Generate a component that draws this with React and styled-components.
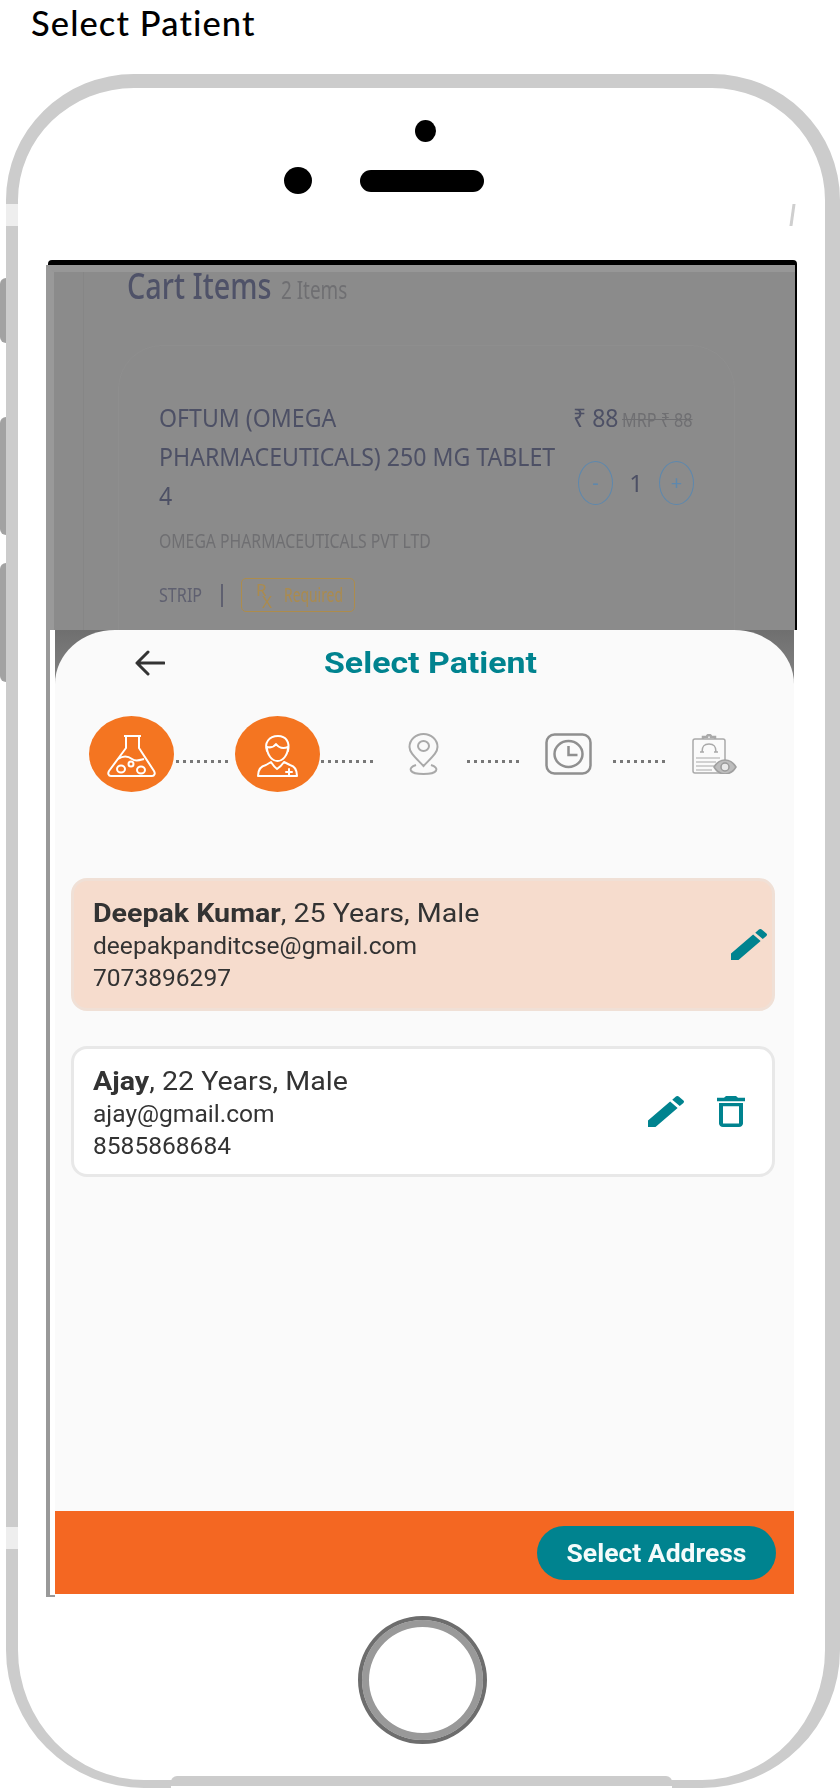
import React from "react";
import styled, { createGlobalStyle, css } from "styled-components";

const Global = createGlobalStyle`
  html, body { margin: 0; padding: 0; background: #fff; }
  body { width: 840px; height: 1788px; overflow: hidden; font-family: Roboto, "Liberation Sans", sans-serif; }
`;

const Page = styled.div`
  width: 840px;
  height: 1788px;
  overflow: hidden;
`;

const PageTitle = styled.h1`
  margin: 0;
  height: 74px;
  padding-left: 31px;
  box-sizing: border-box;
  font: 500 34.5px/46px Lato, sans-serif;
  letter-spacing: 1.1px;
  color: #000;
`;

const Phone = styled.div`
  position: relative;
  box-sizing: border-box;
  width: 834px;
  height: 1714px;
  margin-left: 6px;
  background: #fff;
  border-style: solid;
  border-color: #ccc;
  border-width: 14px 15px 8px 12px;
  border-radius: 128px 128px 138px 138px / 126px 126px 138px 138px;
  &::after {
    content: "";
    position: absolute;
    left: 153px;
    bottom: -8px;
    width: 501px;
    height: 10px;
    background: #ccc;
    border-bottom: 2px solid #fff;
    border-radius: 6px 6px 0 0;
  }
`;

const SideKey = styled.span`
  position: absolute;
  left: -18px;
  top: ${(p) => p.$top}px;
  width: 6px;
  height: ${(p) => p.$h}px;
  background: #a2a2a2;
  border-radius: 6px 0 0 6px;
`;

const Glint = styled.span`
  position: absolute;
  left: -12px;
  top: ${(p) => p.$top}px;
  width: 12px;
  height: 22px;
  background: #eeeeee;
`;

const RightGlint = styled.span`
  position: absolute;
  left: 773px;
  top: 116px;
  width: 3px;
  height: 22px;
  background: #cfcfcf;
  transform: skewX(-8deg);
`;

const Sensors = styled.div`
  height: 172px;
  box-sizing: border-box;
  padding-top: 32px;
`;

const FrontDot = styled.div`
  width: 21px;
  height: 22px;
  margin-left: 397px;
  border-radius: 50%;
  background: #000;
`;

const SensorRow = styled.div`
  display: flex;
  align-items: center;
  gap: 48px;
  margin-top: 25px;
  padding-left: 266px;
`;

const Camera = styled.div`
  width: 28px;
  height: 27px;
  border-radius: 50%;
  background: #000;
`;

const Speaker = styled.div`
  width: 124px;
  height: 22px;
  border-radius: 11px;
  background: #000;
`;

const Screen = styled.div`
  width: 751px;
  margin-left: 28px;
`;

const Backdrop = styled.div`
  box-sizing: border-box;
  height: 370px;
  margin-left: 2px;
  padding: 5px 2px 0 0;
  background: #000;
  border-radius: 4px 4px 0 0;
`;

const Dim = styled.div`
  box-sizing: border-box;
  height: 100%;
  margin-left: -2px;
  overflow: hidden;
  border-top: 7px solid #979797;
  border-left: 8px solid #999;
  background:
    linear-gradient(90deg, transparent 29px, #868686 29px, #868686 30px, transparent 30px),
    #8b8b8b;
`;

const Blurred = styled.div`
  filter: blur(0.45px);
`;

const scaled = css`
  display: inline-block;
  transform: scaleX(${(p) => p.$sx || 1});
  transform-origin: left center;
  white-space: nowrap;
`;

const CartHeading = styled.div`
  height: 81px;
  margin-top: -6px;
  padding-left: 73px;
  font: 500 36px/40px "Noto Sans", sans-serif;
  color: #4f5268;
  white-space: nowrap;
`;

const HeadingMain = styled.span`
  ${scaled}
`;

const HeadingCount = styled.span`
  ${scaled}
  position: absolute;
  margin-left: -27px;
  margin-top: 3px;
  font-size: 25px;
  font-weight: 400;
  color: #6f6f72;
`;

const CartCard = styled.div`
  box-sizing: border-box;
  display: flex;
  width: 617px;
  height: 300px;
  margin-top: -2px;
  margin-left: 64px;
  padding: 52px 0 0 40px;
  border: 1px solid #8e8e8e;
  border-radius: 44px 44px 0 0;
`;

const ItemInfo = styled.div`
  width: 414px;
  flex: none;
`;

const ItemName = styled.div`
  ${scaled}
  font: 400 25px/39px "Noto Sans", sans-serif;
  color: #4d5065;
`;

const Maker = styled.div`
  ${scaled}
  margin-top: 11px;
  font: 400 19px/30px "Noto Sans", sans-serif;
  color: #6f6f72;
`;

const Meta = styled.div`
  display: flex;
  align-items: center;
  margin-top: 22px;
  height: 34px;
`;

const Strip = styled.span`
  ${scaled}
  width: 62px;
  font: 400 19px/30px "Noto Sans", sans-serif;
  color: #5f6070;
`;

const Pipe = styled.span`
  width: 2px;
  height: 23px;
  margin-right: 18px;
  background: #5f6070;
`;

const RxBadge = styled.span`
  box-sizing: border-box;
  display: flex;
  align-items: center;
  width: 114px;
  height: 34px;
  padding-left: 14px;
  border: 1.5px solid #ad8c4c;
  border-radius: 5px;
  color: #ab8b4e;
  font: 400 19px/30px "Noto Sans", sans-serif;
`;

const RxMark = styled.span`
  position: relative;
  width: 30px;
  height: 30px;
  font-size: 17px;
  line-height: 20px;
  &::after {
    content: "X";
    position: absolute;
    left: 6px;
    top: 12px;
  }
`;

const RxText = styled.span`
  ${scaled}
  width: 70px;
`;

const PriceCol = styled.div`
  width: 122px;
  flex: none;
`;

const PriceRow = styled.div`
  display: flex;
  align-items: baseline;
  height: 39px;
  white-space: nowrap;
`;

const Price = styled.span`
  ${scaled}
  width: 51px;
  font: 400 25px/39px "Noto Sans", sans-serif;
  color: #4d5065;
`;

const Mrp = styled.span`
  ${scaled}
  font: 400 19px/30px "Noto Sans", sans-serif;
  color: #6f6f72;
  text-decoration: line-through;
`;

const Stepper = styled.div`
  display: flex;
  align-items: center;
  margin-top: 24px;
  margin-left: 5px;
`;

const RoundBtn = styled.span`
  box-sizing: border-box;
  display: flex;
  align-items: center;
  justify-content: center;
  width: 35px;
  height: 44px;
  border: 1.5px solid #5e88ad;
  border-radius: 50%;
  color: #5e88ad;
  font: 400 20px/1 "Noto Sans", sans-serif;
`;

const Qty = styled.span`
  width: 46px;
  text-align: center;
  font: 400 24px/1 "Noto Sans", sans-serif;
  color: #4d5065;
`;

const Lower = styled.div`
  position: relative;
  box-sizing: border-box;
  width: 749px;
  height: 967px;
  border-left: 4px solid #999;
  padding-left: 5px;
  &::after {
    content: "";
    position: absolute;
    left: 0;
    bottom: 0;
    width: 5px;
    height: 2px;
    background: #999;
  }
`;

const SheetBack = styled.div`
  width: 739px;
  height: 964px;
  background: linear-gradient(180deg, #6f6f6f 0, #858585 60px, #858585 100%);
`;

const Sheet = styled.div`
  display: flex;
  flex-direction: column;
  height: 100%;
  overflow: hidden;
  background: #fafafa;
  border-radius: 60px 60px 0 0 / 54px 54px 0 0;
`;

const Soft = styled.div`
  filter: blur(0.4px);
`;

const SheetHeader = styled(Soft)`
  display: flex;
  align-items: center;
  gap: 159px;
  height: 66px;
  padding: 0 0 0 80px;
  flex: none;
`;

const SheetTitle = styled.div`
  ${scaled}
  font: 700 30px/40px Roboto, sans-serif;
  color: #00838f;
`;

const Steps = styled(Soft)`
  display: flex;
  align-items: center;
  height: 76px;
  margin-top: 20px;
  padding-left: 34px;
  flex: none;
`;

const StepCircle = styled.div`
  display: flex;
  align-items: center;
  justify-content: center;
  width: 85px;
  height: 76px;
  border-radius: 50%;
  background: #f47521;
  flex: none;
`;

const Dots = styled.div`
  flex: none;
  width: 53px;
  height: 3px;
  margin: 14px ${(p) => p.$r}px 0 ${(p) => p.$l}px;
  background: repeating-linear-gradient(90deg, #777 0, #777 3px, transparent 3px, transparent 7px);
`;

const StepIcon = styled.svg`
  flex: none;
  display: block;
  margin-top: ${(p) => p.$mt || 0}px;
`;

const Cards = styled(Soft)`
  display: flex;
  flex-direction: column;
  gap: 35px;
  margin-top: 86px;
  padding-left: 16px;
`;

const Card = styled.div`
  box-sizing: border-box;
  display: flex;
  align-items: center;
  width: 704px;
  height: ${(p) => (p.$selected ? 133 : 131)}px;
  padding: 0 5px 0 19px;
  border: 3px solid ${(p) => (p.$selected ? "#f0e0d6" : "#e8e8e8")};
  border-radius: 16px;
  background: ${(p) => (p.$selected ? "#f6dccd" : "#fff")};
`;

const CardText = styled.div`
  flex: 1;
  color: #333;
  padding-top: ${(p) => p.$pt}px;
`;

const CardName = styled.div`
  ${scaled}
  display: block;
  font: 400 26px/34px Roboto, sans-serif;
  strong { font-weight: 700; }
`;

const CardLine = styled.div`
  ${scaled}
  display: block;
  font: 400 23.5px/32px Roboto, sans-serif;
`;

const CardActions = styled.div`
  display: flex;
  align-items: center;
  gap: 33px;
  margin-right: ${(p) => p.$mr}px;
`;

const ActionIcon = styled.svg`
  display: block;
  flex: none;
  fill: #00838f;
`;

const Footer = styled(Soft)`
  display: flex;
  align-items: center;
  justify-content: flex-end;
  box-sizing: border-box;
  margin-top: auto;
  height: 83px;
  padding-right: 18px;
  background: #f46722;
  flex: none;
`;

const AddressButton = styled.button`
  width: 239px;
  height: 54px;
  border: 0;
  border-radius: 27px;
  background: #00838f;
  color: #f4fbfb;
  font: 700 26.5px/54px Roboto, sans-serif;
  padding: 0;
`;

const HomeButton = styled.div`
  box-sizing: border-box;
  width: 129px;
  height: 128px;
  margin: 19px 0 0 340px;
  border: 4px solid #6d6d6d;
  border-radius: 50%;
  background: #fff;
  box-shadow: inset 0 0 0 7px #999;
`;

const EDIT = "M3 17.25V21h3.75L17.81 9.94l-3.75-3.75L3 17.25zM20.71 7.04c.39-.39.39-1.02 0-1.41l-2.34-2.34c-.39-.39-1.02-.39-1.41 0l-1.83 1.83 3.75 3.75 1.83-1.83z";
const TRASH = "M6 19c0 1.1.9 2 2 2h8c1.1 0 2-.9 2-2V7H6v12zM8 9h8v10H8V9zm7.5-5l-1-1h-5l-1 1H5v2h14V4z";

const EditIcon = () => (
  <ActionIcon width="36" height="31" viewBox="3 3 18 18" preserveAspectRatio="none"><path d={EDIT} /></ActionIcon>
);
const TrashIcon = () => (
  <ActionIcon width="28" height="31" viewBox="5 3 14 18" preserveAspectRatio="none"><path d={TRASH} /></ActionIcon>
);

const BackArrow = () => (
  <svg width="30" height="26" viewBox="0 0 30 26" fill="none" stroke="#333" strokeWidth="3" strokeLinecap="round" strokeLinejoin="round">
    <path d="M29 13H2M13 2 2 13l11 11" />
  </svg>
);

const Flask = () => (
  <StepIcon $mt="4" width="49" height="42" viewBox="0 0 49 42" fill="none" stroke="#fff" strokeWidth="2" strokeLinejoin="round">
    <path d="M17 1h17M19 1v12L2 36c-1.500 2.500-.5 5 2 5h41c2.500 0 3.500-2.500 2-5L32 13V1" />
    <path d="M11 24c6-4 10-3 14 0s8 1 12 0" />
    <ellipse cx="14" cy="34" rx="4" ry="3.500" />
    <ellipse cx="24" cy="29" rx="2.500" ry="2.500" />
    <ellipse cx="34" cy="35" rx="4" ry="3.500" />
  </StepIcon>
);

const Person = () => (
  <StepIcon $mt="4" width="41" height="42" viewBox="0 0 41 42" fill="none" stroke="#fff" strokeWidth="2" strokeLinejoin="round" strokeLinecap="round">
    <path d="M10 16C7 8 12 1 21 1c8 0 12 6 10 15" />
    <path d="M10 12c0 8 5 14 10.500 14S31 20 31 12c-5 2-9 1-12-3-2 3-5 4-9 3z" />
    <path d="M1 41c0-7 3-10 8-11l5-3c2 3 3 5 6 7 3-2 5-4 7-7l6 3c4 1 7 5 7 11z" />
    <path d="M32 34v6M29 37h6" />
  </StepIcon>
);

const Pin = () => (
  <StepIcon width="31" height="42" viewBox="0 0 31 42" fill="none" stroke="#a9a9a9" strokeWidth="2">
    <path d="M15.500 33C8 25 1.500 20 1.500 14a14 13 0 0 1 28 0c0 6-6.500 11-14 19z" />
    <ellipse cx="15.500" cy="13" rx="5.500" ry="5" />
    <path d="M8 32c-9 3-7 9 7.500 9s16.500-6 7.500-9" />
  </StepIcon>
);

const Clock = () => (
  <StepIcon width="47" height="42" viewBox="0 0 47 42" fill="none" stroke="#8f8f8f" strokeWidth="2.500">
    <rect x="1.500" y="1.500" width="44" height="39" rx="8" />
    <ellipse cx="23.500" cy="21" rx="14" ry="13" />
    <path d="M23.500 13v9h9" />
  </StepIcon>
);

const Clipboard = () => (
  <StepIcon width="45" height="40" viewBox="0 0 45 40" fill="none" stroke="#a9a9a9" strokeWidth="1.500">
    <rect x="1" y="5" width="32" height="34" rx="2" />
    <path d="M11 5V3h4a2 2 0 0 1 4 0h4v2" strokeWidth="2.500" />
    <path d="M10 18c0-6 2-8 7-8s7 2 7 8M8 18h4M22 18h4" />
    <path d="M4 24h24M4 28h20M4 32h18M4 36h16" stroke="#c4c4c4" />
    <path d="M22 33c3-5 7-7 11-7s8 2 11 7c-3 5-7 7-11 7s-8-2-11-7z" fill="#bdbdbd" stroke="#a0a0a0" />
    <circle cx="33" cy="33" r="4" fill="#e8e8e8" stroke="#999" />
  </StepIcon>
);

export default function App() {
  return (
    <Page>
      <Global />
      <PageTitle>Select Patient</PageTitle>
      <Phone>
        <SideKey $top={190} $h={65} />
        <SideKey $top={329} $h={118} />
        <SideKey $top={475} $h={119} />
        <Glint $top={116} />
        <Glint $top={1439} />
        <RightGlint />
        <Sensors>
          <FrontDot />
          <SensorRow>
            <Camera />
            <Speaker />
          </SensorRow>
        </Sensors>
        <Screen>
          <Backdrop>
            <Dim>
              <Blurred>
                <CartHeading>
                  <HeadingMain $sx={0.8}>Cart Items</HeadingMain>
                  <HeadingCount $sx={0.755}>2 Items</HeadingCount>
                </CartHeading>
                <CartCard>
                  <ItemInfo>
                    <ItemName $sx={0.925}>
                      OFTUM (OMEGA<br />PHARMACEUTICALS) 250 MG TABLET<br />4
                    </ItemName>
                    <Maker $sx={0.83}>OMEGA PHARMACEUTICALS PVT LTD</Maker>
                    <Meta>
                      <Strip $sx={0.85}>STRIP</Strip>
                      <Pipe />
                      <RxBadge>
                        <RxMark>R</RxMark>
                        <RxText $sx={0.73}>Required</RxText>
                      </RxBadge>
                    </Meta>
                  </ItemInfo>
                  <PriceCol>
                    <PriceRow>
                      <Price $sx={0.92}>₹ 88</Price>
                      <Mrp $sx={0.85}>MRP ₹ 88</Mrp>
                    </PriceRow>
                    <Stepper>
                      <RoundBtn>-</RoundBtn>
                      <Qty>1</Qty>
                      <RoundBtn>+</RoundBtn>
                    </Stepper>
                  </PriceCol>
                </CartCard>
              </Blurred>
            </Dim>
          </Backdrop>
          <Lower>
            <SheetBack>
              <Sheet>
                <SheetHeader>
                  <BackArrow />
                  <SheetTitle $sx={1.13}>Select Patient</SheetTitle>
                </SheetHeader>
                <Steps>
                  <StepCircle><Flask /></StepCircle>
                  <Dots $l={2} $r={6} />
                  <StepCircle><Person /></StepCircle>
                  <Dots $l={1} $r={34} />
                  <Pin />
                  <Dots $l={28} $r={25} />
                  <Clock />
                  <Dots $l={21} $r={26} />
                  <Clipboard />
                </Steps>
                <Cards>
                  <Card $selected>
                    <CardText $pt={1}>
                      <CardName $sx={1.1}><strong>Deepak Kumar</strong>, 25 Years, Male</CardName>
                      <CardLine $sx={1.045}>deepakpanditcse@gmail.com</CardLine>
                      <CardLine $sx={1.045}>7073896297</CardLine>
                    </CardText>
                    <CardActions $mr={0}>
                      <EditIcon />
                    </CardActions>
                  </Card>
                  <Card>
                    <CardText $pt={3}>
                      <CardName $sx={1.1}><strong>Ajay</strong>, 22 Years, Male</CardName>
                      <CardLine $sx={1.045}>ajay@gmail.com</CardLine>
                      <CardLine $sx={1.045}>8585868684</CardLine>
                    </CardText>
                    <CardActions $mr={22}>
                      <EditIcon />
                      <TrashIcon />
                    </CardActions>
                  </Card>
                </Cards>
                <Footer>
                  <AddressButton>Select Address</AddressButton>
                </Footer>
              </Sheet>
            </SheetBack>
          </Lower>
        </Screen>
        <HomeButton />
      </Phone>
    </Page>
  );
}
